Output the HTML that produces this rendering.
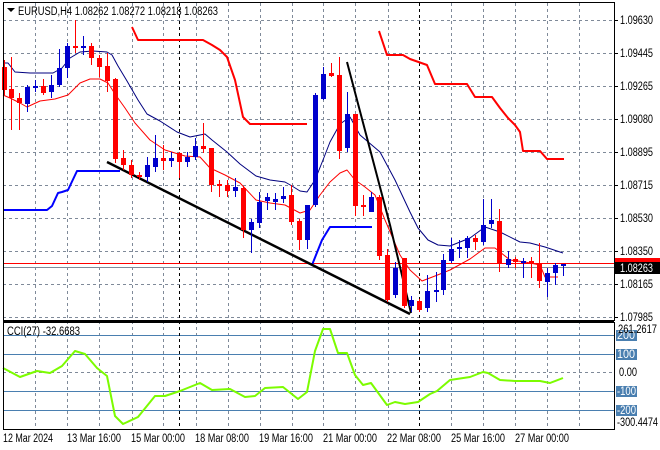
<!DOCTYPE html>
<html><head><meta charset="utf-8"><style>
html,body{margin:0;padding:0;background:#fff;width:660px;height:450px;overflow:hidden}
svg{display:block}
text{font-family:"Liberation Sans",sans-serif;font-size:11.5px;fill:#000}
</style></head><body>
<svg id="s" width="660" height="450" xmlns="http://www.w3.org/2000/svg">
<rect width="660" height="450" fill="#fff"/>
<g id="grid" stroke="#7f8a99" stroke-width="1" stroke-dasharray="3,3"></g>
<g stroke="#4a7fb0" stroke-width="1">
<line x1="3" y1="335.5" x2="614" y2="335.5"/>
<line x1="3" y1="354.5" x2="614" y2="354.5"/>
<line x1="3" y1="391.5" x2="614" y2="391.5"/>
<line x1="3" y1="410.5" x2="614" y2="410.5"/>
</g>
<line x1="3" y1="372.5" x2="614" y2="372.5" stroke="#7f8a99" stroke-dasharray="3,3"/>
<g stroke="#000" stroke-dasharray="3,3" stroke-width="1">
<line x1="179.5" y1="3" x2="179.5" y2="429"/>
<line x1="419.5" y1="3" x2="419.5" y2="429"/>
</g>
<line x1="3" y1="263.5" x2="614" y2="263.5" stroke="#ff0000"/>
<line x1="3" y1="267.5" x2="614" y2="267.5" stroke="#7f8a99"/>
<g id="lines" fill="none"></g>
<g id="candles"></g>
<rect x="3.5" y="2.5" width="611" height="318" fill="none" stroke="#000"/>
<rect x="3.5" y="322.5" width="611" height="107" fill="none" stroke="#000"/>
<line x1="3" y1="321" x2="614" y2="321" stroke="#000" stroke-width="2"/>
<polygon points="7,8 15,8 11,12" fill="#000"/>
<text x="18" y="15" textLength="200" lengthAdjust="spacingAndGlyphs">EURUSD,H4  1.08262 1.08272 1.08218 1.08263</text>
<text x="7" y="335" textLength="73" lengthAdjust="spacingAndGlyphs">CCI(27) -32.6683</text>
<g id="axis"></g>
<rect x="615" y="258" width="45" height="9" fill="#ff0000"/>
<rect x="615" y="262" width="45" height="12" fill="#000"/>
<text x="620" y="272" style="fill:#fff" textLength="33" lengthAdjust="spacingAndGlyphs">1.08263</text>
<g fill="#4a7fb0">
<rect x="616" y="330" width="21" height="11"/>
<rect x="616" y="349" width="21" height="11"/>
<rect x="616" y="386" width="21" height="11"/>
<rect x="616" y="405" width="21" height="11"/>
</g>
<text x="617" y="339" style="fill:#fff" textLength="18" lengthAdjust="spacingAndGlyphs">200</text>
<text x="617" y="358" style="fill:#fff" textLength="18" lengthAdjust="spacingAndGlyphs">100</text>
<text x="617" y="395" style="fill:#fff" textLength="19" lengthAdjust="spacingAndGlyphs">-100</text>
<text x="617" y="414" style="fill:#fff" textLength="19" lengthAdjust="spacingAndGlyphs">-200</text>
<text x="618" y="333" textLength="39" lengthAdjust="spacingAndGlyphs">261.2617</text>
<text x="619" y="376" textLength="18" lengthAdjust="spacingAndGlyphs">0.00</text>
<text x="617" y="426" textLength="41" lengthAdjust="spacingAndGlyphs">-300.4474</text>
<g id="dates"></g>
</svg>
<script>
var NS="http://www.w3.org/2000/svg";
function el(p,t,a){var e=document.createElementNS(NS,t);for(var k in a)e.setAttribute(k,a[k]);p.appendChild(e);return e;}
var g=document.getElementById('grid');
var xs=[35,67,99,132,163,196,228,260,292,323,355,388,451,483,515,547,579];
xs.forEach(function(x){el(g,'line',{x1:x+.5,y1:3,x2:x+.5,y2:429});});
var ys=[20,53,86,119,152,185,218,251,284,317];
ys.forEach(function(y){el(g,'line',{x1:3,y1:y+.5,x2:614,y2:y+.5});});
var ax=document.getElementById('axis');
var pl=["1.09630","1.09445","1.09265","1.09080","1.08895","1.08715","1.08530","1.08350","1.08165","1.07985"];
ys.forEach(function(y,i){el(ax,'line',{x1:614,y1:y+.5,x2:618,y2:y+.5,stroke:'#000'});var t=el(ax,'text',{x:620,y:y+4,textLength:33,lengthAdjust:'spacingAndGlyphs'});t.textContent=pl[i];});
var D=document.getElementById('dates');
[["12 Mar 2024",3,50],["13 Mar 16:00",67,54],["15 Mar 00:00",131,54],["18 Mar 08:00",195,54],["19 Mar 16:00",259,54],["21 Mar 00:00",323,54],["22 Mar 08:00",387,54],["25 Mar 16:00",451,54],["27 Mar 00:00",515,54]].forEach(function(d){var t=el(D,'text',{x:d[1],y:442,textLength:d[2],lengthAdjust:'spacingAndGlyphs'});t.textContent=d[0];});
var L=document.getElementById('lines');
function pl_(pts,c,w){el(L,'polyline',{points:pts,stroke:c,'stroke-width':w,fill:'none','stroke-linejoin':'round'});}
pl_("3,63 8,63 15,72 30,73 53,73 62,68 70,58 80,52 93,51 107,52 112,55 118,66 127,81 138,100 147,114 160,121 177,132 190,137 205,134 212,140 227,152 240,164 256,176 270,180 285,182 292,186 300,191 307,192 315,180 323,160 330,142 340,124 350,117 360,135 380,152 395,180 410,212 418,228 428,240 438,245 450,246 470,238 485,227 500,232 520,242 530,243 545,247 563,253","#00007f",1);
pl_("3,95 10,98 20,103 27,107 40,101 55,99 68,95 80,83 90,79 100,79 108,83 115,94 125,108 135,123 150,140 165,150 185,156 200,157 210,168 225,175 240,183 256,200 270,203 285,205 300,213 310,210 320,195 330,182 340,173 347,170 355,180 365,187 375,195 385,220 400,255 410,270 422,281 435,276 450,270 470,259 485,248 495,248 510,260 525,262 540,265 545,277 558,277","#ff0000",1);
pl_("132,27 138,40 203,40 212,45 220,50 227,57 235,80 243,117 250,124 307,124","#ff0000",2);
pl_("379,31 387,55 403,55 410,59 427,65 435,84 467,84 475,97 492,97 500,108 508,118 515,125 520,132 523,151 540,151 547,159 564,159","#ff0000",2);
pl_("3,210 47,210 52,206 58,193 62,192 68,190 77,171 120,171","#0000ff",2);
pl_("312,265 316,255 322,240 330,227 372,227","#0000ff",2);
pl_("107,162 410,314","#000",2.5);
pl_("347,62 390,225 411,313","#000",2);
pl_("3,368 20,377 37,371 50,373 62,366 75,351 85,354 97,368 107,376 115,416 123,424 138,417 155,396 165,396 180,391 200,383 212,390 230,389 245,397 255,396 265,388 283,387 298,399 307,392 315,351 323,329 330,329 338,353 347,353 355,375 363,385 371,383 387,405 395,402 405,404 418,402 430,394 437,391 450,380 470,377 483,372 488,373 500,380 515,381 540,381 550,383 563,378","#7cfc00",2);
var C=document.getElementById('candles');
var R='#ff0000',B='#0000cc';
var cd=[
[4,67,90,60,95,R],[11,89,98,57,130,R],[19,98,103,93,130,R],[27,87,104,85,112,B],[35,86,88,80,92,B],
[43,86,93,79,95,R],[51,85,92,75,98,B],[59,68,85,49,87,B],[67,46,68,43,78,B],[75,46,48,20,53,R],
[83,46,48,36,55,B],[91,46,58,43,65,R],[99,58,67,55,77,R],[107,66,81,53,92,R],[115,79,159,78,163,R],
[123,158,165,150,170,R],[131,165,175,160,178,R],[139,175,177,172,180,R],[147,165,177,157,182,B],[155,158,167,135,172,B],
[163,158,161,145,170,R],[171,158,161,152,167,B],[179,153,162,152,178,R],[187,157,162,152,167,B],[195,146,157,138,160,B],
[203,146,149,123,153,R],[211,148,185,148,192,R],[219,184,186,180,197,R],[227,185,191,180,197,R],[235,187,191,178,197,B],
[243,188,230,186,238,R],[251,222,230,219,253,B],[259,202,223,192,228,B],[267,197,201,193,210,B],[275,199,202,193,210,B],
[283,196,199,187,203,B],[291,195,222,185,225,R],[299,221,240,219,250,R],[307,205,240,205,249,B],[315,95,205,93,207,B],
[323,74,99,67,100,B],[331,73,76,63,77,R],[339,75,151,57,159,R],[347,114,148,92,152,B],[355,114,206,114,216,R],
[363,205,207,195,216,R],[371,197,212,192,212,B],[379,197,256,195,260,R],[387,255,300,249,302,R],[395,268,295,262,298,B],
[404,258,306,258,308,R],[411,300,306,296,312,B],[419,301,310,299,312,R],[427,291,308,275,312,B],[436,290,292,272,302,B],
[443,260,290,254,295,B],[451,249,261,238,263,B],[459,247,249,240,258,B],[467,238,248,236,258,B],[475,238,242,235,250,R],
[483,225,242,199,245,B],[491,220,224,199,228,B],[499,221,264,209,272,R],[508,259,265,251,268,B],[515,259,262,257,268,R],
[523,261,263,258,278,B],[531,261,263,257,278,R],[539,263,281,243,288,R],[547,273,282,268,297,B],[555,265,273,263,285,B],
[563,264,266,264,276,B]];
cd.forEach(function(c){el(C,'line',{x1:c[0]+.5,y1:c[3],x2:c[0]+.5,y2:c[4],stroke:c[5]});
el(C,'rect',{x:c[0]-2,y:c[1],width:5,height:Math.max(1,c[2]-c[1]),fill:c[5]});});
</script>
</body></html>
